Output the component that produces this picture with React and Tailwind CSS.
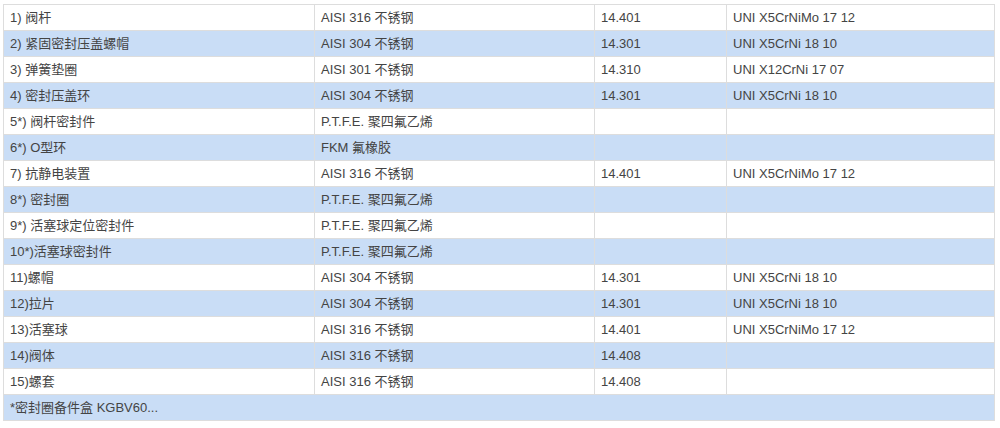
import React from "react";

const rows = [
  ["1) 阀杆", "AISI 316 不锈钢", "14.401", "UNI X5CrNiMo 17 12"],
  ["2) 紧固密封压盖螺帽", "AISI 304 不锈钢", "14.301", "UNI X5CrNi 18 10"],
  ["3) 弹簧垫圈", "AISI 301 不锈钢", "14.310", "UNI X12CrNi 17 07"],
  ["4) 密封压盖环", "AISI 304 不锈钢", "14.301", "UNI X5CrNi 18 10"],
  ["5*) 阀杆密封件", "P.T.F.E. 聚四氟乙烯", "", ""],
  ["6*) O型环", "FKM 氟橡胶", "", ""],
  ["7) 抗静电装置", "AISI 316 不锈钢", "14.401", "UNI X5CrNiMo 17 12"],
  ["8*) 密封圈", "P.T.F.E. 聚四氟乙烯", "", ""],
  ["9*) 活塞球定位密封件", "P.T.F.E. 聚四氟乙烯", "", ""],
  ["10*)活塞球密封件", "P.T.F.E. 聚四氟乙烯", "", ""],
  ["11)螺帽", "AISI 304 不锈钢", "14.301", "UNI X5CrNi 18 10"],
  ["12)拉片", "AISI 304 不锈钢", "14.301", "UNI X5CrNi 18 10"],
  ["13)活塞球", "AISI 316 不锈钢", "14.401", "UNI X5CrNiMo 17 12"],
  ["14)阀体", "AISI 316 不锈钢", "14.408", ""],
  ["15)螺套", "AISI 316 不锈钢", "14.408", ""],
];

export default function App() {
  return (
    <div className="bg-white w-[1000px] h-[428px] pt-1 pl-[3px] font-['Liberation_Sans','Noto_Sans_CJK_SC',sans-serif] text-[13px] text-[#444]">
      <table className="w-[991px] border-collapse table-fixed">
        <colgroup>
          <col className="w-[311px]" />
          <col className="w-[280px]" />
          <col className="w-[132px]" />
          <col className="w-[268px]" />
        </colgroup>
        <tbody>
          {rows.map((row, i) => (
            <tr key={i} className={i % 2 === 1 ? "bg-[#c9ddf6]" : "bg-white"}>
              {row.map((cell, j) => (
                <td key={j} className="h-[26px] border border-[#ddd] px-[6px] py-0 leading-[25px] whitespace-nowrap">
                  {cell}
                </td>
              ))}
            </tr>
          ))}
          <tr className="bg-[#c9ddf6]">
            <td colSpan={4} className="h-[26px] border border-[#ddd] px-[6px] py-0 leading-[25px]">
              *密封圈备件盒 KGBV60...
            </td>
          </tr>
        </tbody>
      </table>
    </div>
  );
}
